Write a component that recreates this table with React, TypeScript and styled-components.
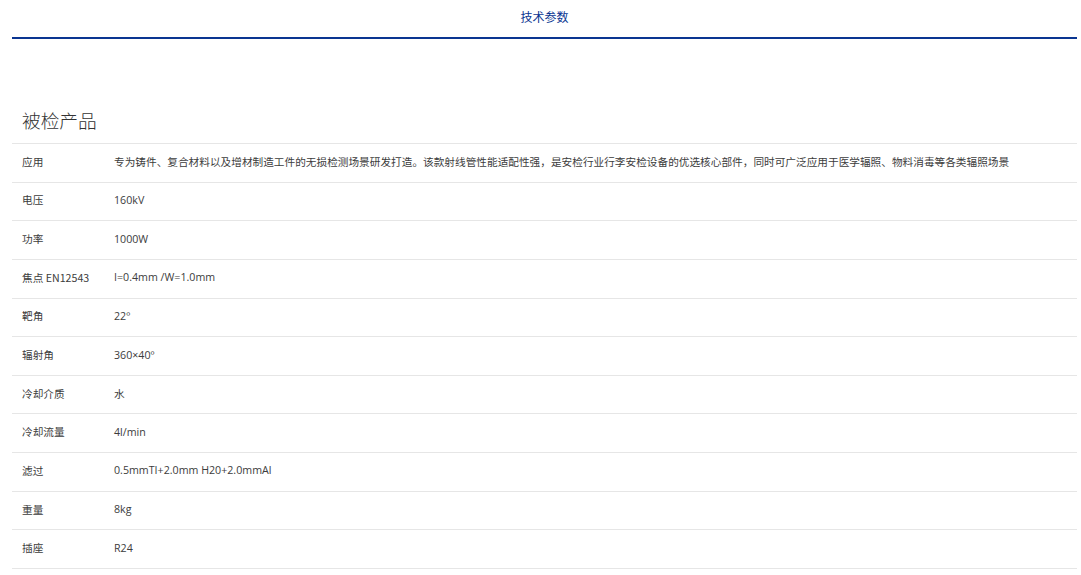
import React from "react";
import styled, { createGlobalStyle } from "styled-components";

const Global = createGlobalStyle`
  html, body { margin: 0; padding: 0; background: #fff; }
  body { font-family: "Open Sans", "Noto Sans CJK SC", sans-serif; color: #333; }
`;

const Page = styled.div`
  margin: 0 4px 0 12px;
`;

const TabBar = styled.div`
  display: flex;
  justify-content: center;
  border-bottom: 2px solid #0a3591;
  height: 37px;
`;

const Tab = styled.div`
  font-size: 12px;
  line-height: 34px;
  color: #0a3591;
  font-family: "Noto Sans CJK SC", sans-serif;
`;

const Title = styled.h2`
  margin: 62px 0 0;
  padding-left: 10px;
  font-size: 18.7px;
  line-height: 38px;
  height: 40px;
  font-weight: 300;
  color: #333;
  font-family: "Noto Sans CJK SC", sans-serif;
`;

const Table = styled.div`
  margin-top: 2px;
  border-top: 1px solid #e6e6e6;
`;

const Row = styled.div`
  display: grid;
  grid-template-columns: 92px 1fr;
  align-items: center;
  box-sizing: border-box;
  height: 38.65px;
  padding: 0 0 3px 10px;
  border-bottom: 1px solid #e6e6e6;
  font-size: 10.67px;
  color: #3c3c3c;
`;

const Label = styled.div`
  white-space: nowrap;
  font-family: "Noto Sans CJK SC", "Open Sans", sans-serif;
  font-weight: 400;
`;

const Value = styled.div`
  white-space: nowrap;
  font-weight: 400;
  color: #3c3c3c;
`;

const rows: [string, string][] = [
  ["应用", "专为铸件、复合材料以及增材制造工件的无损检测场景研发打造。该款射线管性能适配性强，是安检行业行李安检设备的优选核心部件，同时可广泛应用于医学辐照、物料消毒等各类辐照场景"],
  ["电压", "160kV"],
  ["功率", "1000W"],
  ["焦点 EN12543", "I=0.4mm /W=1.0mm"],
  ["靶角", "22º"],
  ["辐射角", "360×40º"],
  ["冷却介质", "水"],
  ["冷却流量", "4l/min"],
  ["滤过", "0.5mmTI+2.0mm H20+2.0mmAl"],
  ["重量", "8kg"],
  ["插座", "R24"],
];

export default function App() {
  return (
    <Page>
      <Global />
      <TabBar>
        <Tab>技术参数</Tab>
      </TabBar>
      <Title>被检产品</Title>
      <Table>
        {rows.map(([k, v]) => (
          <Row key={k}>
            <Label>{k}</Label>
            <Value>{v}</Value>
          </Row>
        ))}
      </Table>
    </Page>
  );
}
